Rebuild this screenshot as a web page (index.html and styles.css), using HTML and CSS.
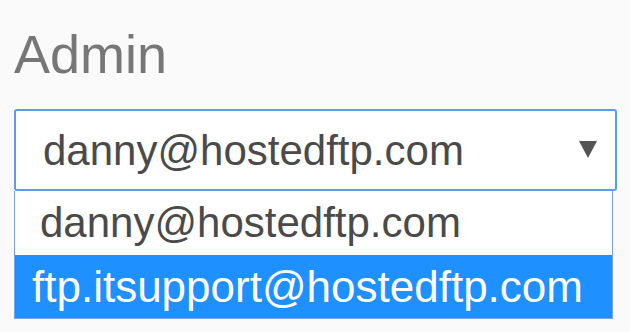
FILE: index.html
```html
<!DOCTYPE html>
<html lang="en">
<head>
<meta charset="utf-8">
<title>Admin</title>
<link rel="stylesheet" href="styles.css">
</head>
<body>
<div class="wrap">
  <h2 class="label">Admin</h2>
  <div class="select">
    <span class="value">danny@hostedftp.com</span>
    <svg class="arrow" width="18" height="17" viewBox="0 0 18 17"><polygon points="0,0 18,0 9,17" fill="#555555"/></svg>
  </div>
  <ul class="list">
    <li class="opt">danny@hostedftp.com</li>
    <li class="opt active">ftp.itsupport@hostedftp.com</li>
  </ul>
</div>
</body>
</html>
```
FILE: styles.css
```css
html, body {
  margin: 0;
  padding: 0;
  background: #fafafa;
}
body {
  font-family: "Liberation Sans", Arial, sans-serif;
}
.wrap {
  padding: 23px 13px 0 14px;
}
.label {
  margin: 0 0 24px 0;
  font-weight: normal;
  font-size: 54px;
  line-height: 62px;
  color: #777777;
}
.select {
  box-sizing: border-box;
  height: 82px;
  border: 2px solid #5b9bf0;
  border-radius: 3px;
  background: #ffffff;
  display: flex;
  align-items: center;
  justify-content: space-between;
  padding: 0 18px 0 27px;
}
.value {
  font-size: 42px;
  line-height: 47px;
  color: #4a4a4a;
}
.arrow {
  display: block;
  margin-top: -2px;
}
.list {
  list-style: none;
  margin: 0 4px 0 0;
  padding: 0;
  border: 1px solid #7b9fe0;
  border-top: none;
  background: #ffffff;
}
.opt {
  height: 64px;
  display: flex;
  align-items: center;
  padding-left: 25px;
  font-size: 42px;
  color: #4a4a4a;
}
.opt.active {
  height: 63px;
  padding-left: 17px;
  font-size: 44px;
  background: #1e90ff;
  color: #ffffff;
}
```
